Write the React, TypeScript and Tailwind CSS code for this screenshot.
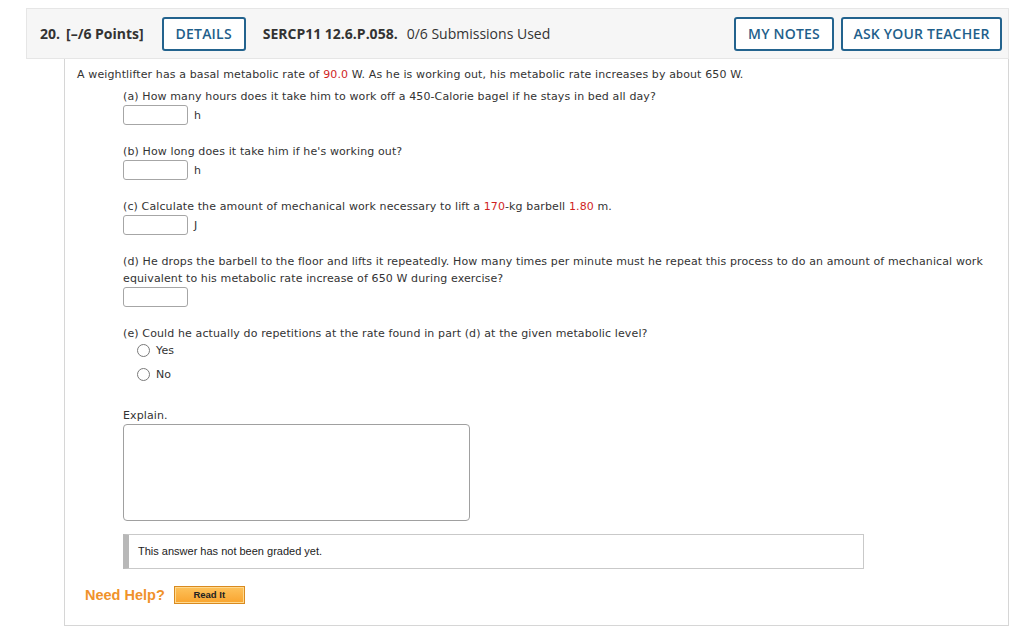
import React from 'react';

const HEAD = { fontFamily: '"Open Sans", "Liberation Sans", sans-serif' };
const BODY = { fontFamily: '"DejaVu Sans", Verdana, sans-serif' };
const ARIAL = { fontFamily: '"Liberation Sans", Arial, sans-serif' };

const Red: React.FC<{ children: React.ReactNode }> = ({ children }) => (
  <span className="text-[#d01f1f]">{children}</span>
);

const AnswerBox: React.FC<{ unit?: string }> = ({ unit }) => (
  <div className="flex items-center h-[20px]">
    <div className="w-[65px] h-[20px] border border-[#a6a6a6] rounded-[3px] bg-white" />
    {unit && <span className="ml-[6px] text-[11px] leading-[17px]">{unit}</span>}
  </div>
);

const HeaderButton: React.FC<{ label: string; className?: string }> = ({ label, className = '' }) => (
  <button
    className={`h-[34px] border-2 border-[#23638e] rounded-[3px] bg-white text-[#1f5f8b] text-[14px] font-semibold tracking-[0.2px] ${className}`}
  >
    {label}
  </button>
);

const Radio: React.FC<{ label: string; className?: string }> = ({ label, className = '' }) => (
  <div className={`flex items-center h-[17px] pl-[14px] ${className}`}>
    <span className="w-[13px] h-[13px] rounded-full border border-[#7a7a7a] bg-white" />
    <span className="ml-[6px] text-[11px]">{label}</span>
  </div>
);

export default function App() {
  return (
    <div className="w-[1024px] h-[635px] bg-white pt-[8px] pl-[26px] text-[#333]">
      {/* Question header */}
      <div
        className="w-[983px] h-[51px] bg-[#f6f6f6] border border-[#e6e6e6] flex items-center pl-[13px] pr-[6px]"
        style={HEAD}
      >
        <span className="text-[14px] font-bold">20.</span>
        <span className="ml-[6px] text-[14px] font-bold">[–/6 Points]</span>
        <HeaderButton label="DETAILS" className="ml-[18px] w-[84px]" />
        <span className="ml-[17px] text-[14px] font-bold">SERCP11 12.6.P.058.</span>
        <span className="ml-[9px] text-[14px]">0/6 Submissions Used</span>
        <div className="ml-auto flex gap-[7px]">
          <HeaderButton label="MY NOTES" className="w-[100px]" />
          <HeaderButton label="ASK YOUR TEACHER" className="w-[161px]" />
        </div>
      </div>

      {/* Question body */}
      <div
        className="ml-[38px] w-[945px] h-[567px] border-l border-r border-b border-[#d6d6d6] pt-[7px] text-[11px] leading-[17px] tracking-[0.12px] text-[#333]"
        style={BODY}
      >
        <p className="pl-[12px]">
          A weightlifter has a basal metabolic rate of <Red>90.0</Red> W. As he is working out, his metabolic rate
          increases by about 650 W.
        </p>

        <div className="pl-[58px] pr-[20px]">
          <p className="mt-[5px]">(a) How many hours does it take him to work off a 450-Calorie bagel if he stays in bed all day?</p>
          <AnswerBox unit="h" />

          <p className="mt-[18px]">(b) How long does it take him if he's working out?</p>
          <AnswerBox unit="h" />

          <p className="mt-[18px]">
            (c) Calculate the amount of mechanical work necessary to lift a <Red>170</Red>-kg barbell <Red>1.80</Red> m.
          </p>
          <AnswerBox unit="J" />

          <p className="mt-[18px]">
            (d) He drops the barbell to the floor and lifts it repeatedly. How many times per minute must he repeat this
            process to do an amount of mechanical work equivalent to his metabolic rate increase of 650 W during exercise?
          </p>
          <AnswerBox />

          <p className="mt-[18px]">(e) Could he actually do repetitions at the rate found in part (d) at the given metabolic level?</p>
          <Radio label="Yes" />
          <Radio label="No" className="mt-[7px]" />

          <p className="mt-[24px]">Explain.</p>
          <div className="w-[347px] h-[97px] border border-[#a0a0a0] rounded-[4px] bg-white" />

          <div
            className="mt-[13px] w-[741px] h-[35px] border border-[#c9c9c9] border-l-[6px] border-l-[#b8b8b8] flex items-center pl-[9px] tracking-normal"
            style={ARIAL}
          >
            <span className="text-[11px] text-[#222]">This answer has not been graded yet.</span>
          </div>
        </div>

        <div className="mt-[17px] pl-[20px] flex items-center tracking-normal" style={ARIAL}>
          <span className="text-[14.5px] leading-[18px] font-bold text-[#f0922a]">Need Help?</span>
          <button className="ml-[9px] w-[71px] h-[18px] border border-[#d98a1f] bg-gradient-to-b from-[#fdc25a] to-[#f9a42c] shadow-[inset_0_0_0_1px_#ffd98e] text-[9.5px] font-bold text-[#222] leading-none">
            Read It
          </button>
        </div>
      </div>
    </div>
  );
}
